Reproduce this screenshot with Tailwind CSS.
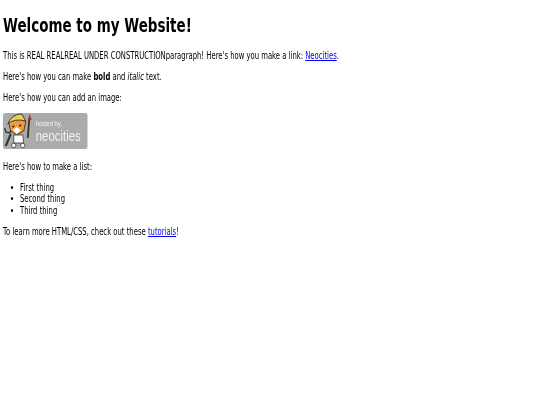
<!doctype html>
<html lang="en">
<head>
  <meta charset="UTF-8" />
  <title>The web site of me</title>
  <script src="https://cdn.jsdelivr.net/npm/@tailwindcss/browser@4"></script>
</head>
<body class="bg-white text-black font-['DejaVu_Sans'] text-[10px] leading-[11.5px] h-[405px] overflow-hidden">
  <div class="w-[540px] px-[4.4px] pt-[14px] flex flex-col gap-[9.5px] origin-top-left scale-x-[0.685] blur-[0.25px]">
    <h1 class="text-[19.7px] leading-[23px] font-bold mb-[3px]">Welcome to my Website!</h1>

    <p>This is REAL REALREAL UNDER CONSTRUCTIONparagraph! Here's how you make a link: <a href="#" class="text-[#0000ee] underline">Neocities</a>.</p>
    <p>Here's how you can make <strong class="font-bold">bold</strong> and <em class="italic">italic</em> text.</p>
    <p>Here's how you can add an image:</p>

    <!-- neocities badge, 85x36 once squeezed -->
    <svg class="block mb-[2.5px]" width="124.1" height="36" viewBox="0 0 85 36" preserveAspectRatio="none" xmlns="http://www.w3.org/2000/svg">
      <rect x="0" y="0" width="85" height="36" rx="3" fill="#ababab" />
      <!-- wrench -->
      <path d="M3 33 L8 21" stroke="#333" stroke-width="2" />
      <path d="M2 15 L3 19 L7 20 L9 16" fill="none" stroke="#333" stroke-width="1.3" />
      <!-- brush -->
      <path d="M26.5 6 L25 25" stroke="#4a2e22" stroke-width="1.8" />
      <path d="M27 1 L29 7 L25 7 Z" fill="#a83a28" />
      <!-- cat -->
      <path d="M6 10 L11 3 L19 2 L23 9 L21 18 L14 22 L8 18 Z" fill="#ee9a3c" stroke="#333" stroke-width="0.9" />
      <path d="M5 11 Q9 1 19 1 L23 8 Q12 5 5 11 Z" fill="#f2cf4a" stroke="#333" stroke-width="0.9" />
      <path d="M10 17 L14 14 L18 17 L14 21 Z" fill="#fff" />
      <circle cx="10.5" cy="13.5" r="1.1" fill="#222" />
      <circle cx="17.5" cy="12.5" r="1.1" fill="#222" />
      <path d="M11 22 L20 22 L21 30 L11 30 Z" fill="#fff" stroke="#333" stroke-width="0.8" />
      <circle cx="11" cy="32.5" r="2.2" fill="#fff" stroke="#333" stroke-width="0.8" />
      <circle cx="20" cy="32.5" r="2.2" fill="#fff" stroke="#333" stroke-width="0.8" />
      <text x="33" y="13.5" font-family="Liberation Sans" font-size="6.5" fill="#f2f2f2" textLength="26" lengthAdjust="spacingAndGlyphs">hosted by,</text>
      <text x="33" y="28" font-family="Liberation Sans" font-size="14" fill="#f2f2f2" textLength="45" lengthAdjust="spacingAndGlyphs">neocities</text>
    </svg>

    <p>Here's how to make a list:</p>
    <ul class="list-disc pl-[24.8px]">
      <li>First thing</li>
      <li>Second thing</li>
      <li>Third thing</li>
    </ul>
    <p>To learn more HTML/CSS, check out these <a href="#" class="text-[#0000ee] underline">tutorials</a>!</p>
  </div>
</body>
</html>
